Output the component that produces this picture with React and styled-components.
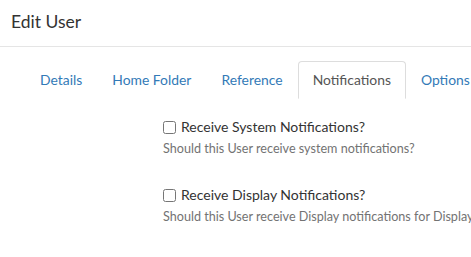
import React from 'react';
import styled, { createGlobalStyle } from 'styled-components';

const GlobalStyle = createGlobalStyle`
  html, body {
    margin: 0;
    padding: 0;
    background: #fff;
  }
  body {
    font-family: Lato, "Open Sans", sans-serif;
    font-size: 14px;
    color: #333;
  }
`;

const TABS = [
  { id: 1, label: 'Details' },
  { id: 2, label: 'Home Folder' },
  { id: 3, label: 'Reference' },
  { id: 4, label: 'Notifications', active: true },
  { id: 5, label: 'Options' },
];

const FIELDS = [
  {
    id: 1,
    label: 'Receive System Notifications?',
    help: 'Should this User receive system notifications?',
  },
  {
    id: 2,
    label: 'Receive Display Notifications?',
    help: 'Should this User receive Display notifications for Displays they have access to?',
  },
];

const App = () => (
  <>
    <GlobalStyle />
    <Page>
      <Header>
        <Title>Edit User</Title>
      </Header>
      <Body>
        <TabList>
          {TABS.map(({ id, label, active }) => (
            <Tab key={id} $active={active}>
              {label}
            </Tab>
          ))}
        </TabList>
        <Form>
          {FIELDS.map(({ id, label, help }) => (
            <Field key={id}>
              <CheckLabel>
                <Check type="checkbox" />
                {label}
              </CheckLabel>
              <Help>{help}</Help>
            </Field>
          ))}
        </Form>
      </Body>
    </Page>
  </>
);

const Page = styled.div`
  width: 471px;
  height: 257px;
  overflow: hidden;
`;

const Header = styled.div`
  height: 47px;
  padding: 0 11px 4px;
  box-sizing: border-box;
  display: flex;
  align-items: center;
  border-bottom: 1px solid #e5e5e5;
`;

const Title = styled.h4`
  margin: 0;
  font-size: 17.5px;
  font-weight: 400;
  color: #333;
`;

const Body = styled.div`
  padding: 14px 0 0 25px;
`;

const TabList = styled.div`
  display: flex;
  white-space: nowrap;
  border-bottom: 1px solid #ddd;
`;

const Tab = styled.a`
  flex: none;
  padding: 8px 14px;
  line-height: 20px;
  margin-bottom: -1px;
  font-size: 13.9px;
  border: 1px solid ${({ $active }) => ($active ? '#ddd' : 'transparent')};
  border-bottom-color: ${({ $active }) => ($active ? '#fff' : 'transparent')};
  border-radius: 4px 4px 0 0;
  background: #fff;
  color: ${({ $active }) => ($active ? '#555' : '#337ab7')};
  cursor: pointer;
`;

const Form = styled.div`
  padding: 18px 0 0 138px;
  white-space: nowrap;
`;

const Field = styled.div`
  margin-bottom: 27px;
`;

const CheckLabel = styled.label`
  display: flex;
  align-items: center;
  gap: 5px;
  line-height: 20px;
`;

const Check = styled.input`
  margin: 0;
  width: 13px;
  height: 13px;
`;

const Help = styled.div`
  margin-top: 3px;
  font-size: 12.6px;
  color: #737373;
  line-height: 18px;
`;

export default App;
